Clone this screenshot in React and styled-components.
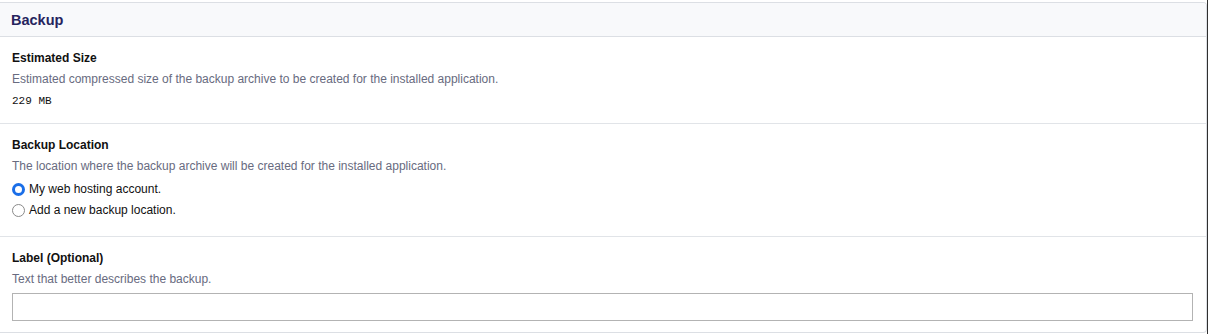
import React, { useState } from 'react';
import styled, { createGlobalStyle } from 'styled-components';

const GlobalStyle = createGlobalStyle`
  html, body {
    margin: 0;
    padding: 0;
    background: #2f2f2f;
  }
  body {
    font-family: "Liberation Sans", Arial, sans-serif;
  }
`;

const Page = styled.div`
  width: 1207px;
  height: 334px;
  background: #fff;
  padding-top: 2px;
  box-sizing: border-box;
`;

const Card = styled.div`
  border: 1px solid #dcdfe4;
  border-left: none;
  border-radius: 0 4px 4px 0;
  background: #fff;
  overflow: hidden;
`;

const Header = styled.div`
  height: 33px;
  display: flex;
  align-items: center;
  padding-left: 11px;
  background: #f8f9fb;
  border-bottom: 1px solid #dcdfe4;
`;

const Title = styled.h2`
  margin: 0;
  font-size: 14.5px;
  font-weight: bold;
  color: #26245e;
`;

const Section = styled.div`
  padding: 14px 12px 0;
  height: ${p => p.$height}px;
  box-sizing: border-box;
  border-bottom: ${p => (p.$last ? 'none' : '1px solid #e1e4e8')};
`;

const FieldTitle = styled.div`
  font-size: 12px;
  font-weight: bold;
  color: #111;
  line-height: 15px;
`;

const Hint = styled.div`
  margin-top: 6px;
  font-size: 12px;
  color: #686b80;
  line-height: 15px;
`;

const Value = styled.div`
  margin-top: 8px;
  font-family: "Liberation Mono", "Courier New", monospace;
  font-size: 11px;
  color: #111;
`;

const RadioList = styled.div`
  margin-top: 8px;
  display: flex;
  flex-direction: column;
  gap: 7px;
`;

const RadioRow = styled.label`
  display: flex;
  align-items: center;
  gap: 4px;
  font-size: 12px;
  color: #111;
  cursor: pointer;
`;

const RadioDot = styled.span`
  width: 13px;
  height: 13px;
  box-sizing: border-box;
  border-radius: 50%;
  border: ${p => (p.$checked ? '3.5px solid #1a6ee8' : '1px solid #8a8a8a')};
  background: #fff;
  flex: none;
`;

const TextInput = styled.input`
  display: block;
  margin-top: 6px;
  width: 1181px;
  height: 28px;
  box-sizing: border-box;
  border: 1px solid #b3b3b3;
  outline: none;
  font-size: 12px;
  font-family: inherit;
  padding: 0 6px;
`;

export default function App() {
  const [location, setLocation] = useState('account');
  const options = [
    { id: 'account', text: 'My web hosting account.' },
    { id: 'new', text: 'Add a new backup location.' },
  ];

  return (
    <Page>
      <GlobalStyle />
      <Card>
        <Header>
          <Title>Backup</Title>
        </Header>
        <Section $height={87}>
          <FieldTitle>Estimated Size</FieldTitle>
          <Hint>Estimated compressed size of the backup archive to be created for the installed application.</Hint>
          <Value>229 MB</Value>
        </Section>
        <Section $height={113}>
          <FieldTitle>Backup Location</FieldTitle>
          <Hint>The location where the backup archive will be created for the installed application.</Hint>
          <RadioList>
            {options.map(o => (
              <RadioRow key={o.id} onClick={() => setLocation(o.id)}>
                <RadioDot $checked={location === o.id} />
                {o.text}
              </RadioRow>
            ))}
          </RadioList>
        </Section>
        <Section $height={95} $last>
          <FieldTitle>Label (Optional)</FieldTitle>
          <Hint>Text that better describes the backup.</Hint>
          <TextInput type="text" />
        </Section>
      </Card>
    </Page>
  );
}
